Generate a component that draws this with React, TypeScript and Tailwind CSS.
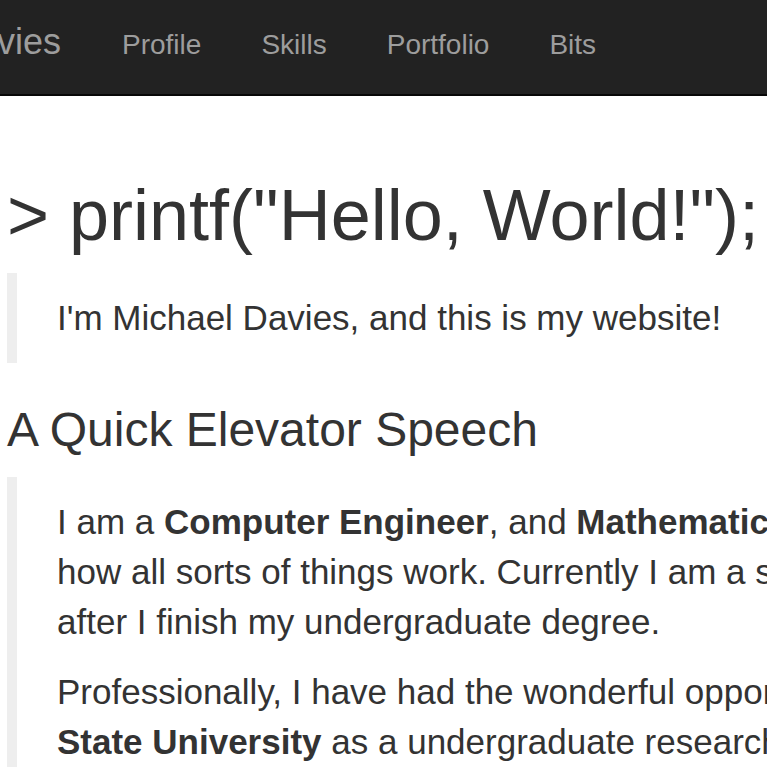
const links = ["Profile", "Skills", "Portfolio", "Bits"];

export default function App() {
  return (
    <div className="w-[767px] h-[767px] overflow-hidden bg-white text-[#333] font-['Liberation_Sans',Arial,sans-serif]">
      <nav className="h-[96px] bg-[#222] border-b-2 border-[#080808] pt-[24px] whitespace-nowrap text-[#9d9d9d]">
        <div className="flex items-baseline">
          <div className="w-[61px] shrink-0 flex justify-end">
            <span className="text-[36px] leading-none">Michael Davies</span>
          </div>
          <ul className="flex ml-[31px]">
            {links.map((l) => (
              <li key={l} className="px-[30px] text-[28px] leading-[40px]">{l}</li>
            ))}
          </ul>
        </div>
      </nav>

      <main className="pl-[7px] whitespace-nowrap">
        <h1 className="mt-[80px] text-[72px] leading-[79px]">&gt; printf("Hello, World!");</h1>
        <blockquote className="mt-[18px] border-l-[10px] border-[#eee] pl-[40px] py-[20px] text-[35px] leading-[50px]">
          <p>I'm Michael Davies, and this is my website!</p>
        </blockquote>
        <h3 className="mt-[40px] text-[48px] leading-[53px]">A Quick Elevator Speech</h3>
        <blockquote className="mt-[21px] border-l-[10px] border-[#eee] pl-[40px] py-[20px] text-[35px] leading-[50px]">
          <p className="mb-[20px]">
            I am a <b>Computer Engineer</b>, and <b>Mathematician</b> at heart, curious about<br />
            how all sorts of things work. Currently I am a student and plan to go on to grad school<br />
            after I finish my undergraduate degree.
          </p>
          <p>
            Professionally, I have had the wonderful opportunity to work at <b>Iowa</b><br />
            <b>State University</b> as a undergraduate researcher.
          </p>
        </blockquote>
      </main>
    </div>
  );
}
